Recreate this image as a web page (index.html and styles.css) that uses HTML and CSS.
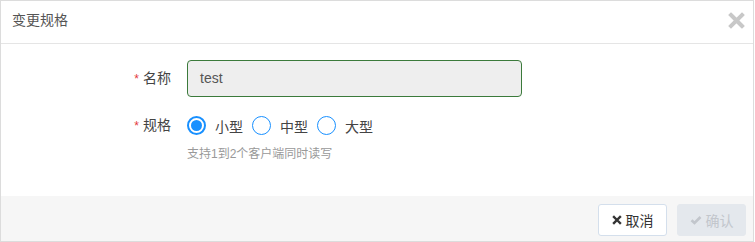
FILE: index.html
```html
<!DOCTYPE html>
<html lang="zh">
<head>
<meta charset="utf-8">
<link rel="stylesheet" href="styles.css">
</head>
<body>
<div class="modal">
  <div class="modal-header">
    <span class="modal-title">变更规格</span>
    <span class="close" aria-label="关闭">
      <svg width="17" height="17" viewBox="0 0 17 17"><path d="M3 3 L14 14 M14 3 L3 14" stroke="#c8c8c8" stroke-width="4" stroke-linecap="square"/></svg>
    </span>
  </div>
  <div class="modal-body">
    <div class="form-row">
      <label class="form-label"><span class="req">*</span>名称</label>
      <div class="form-control">
        <div class="text-input">test</div>
      </div>
    </div>
    <div class="form-row row-radio">
      <label class="form-label"><span class="req">*</span>规格</label>
      <div class="form-control">
        <div class="radio-group">
          <span class="radio checked"></span><span class="radio-text">小型</span>
          <span class="radio"></span><span class="radio-text">中型</span>
          <span class="radio"></span><span class="radio-text">大型</span>
        </div>
        <div class="hint">支持1到2个客户端同时读写</div>
      </div>
    </div>
  </div>
  <div class="modal-footer">
    <button class="btn btn-cancel"><svg width="10" height="10" viewBox="0 0 10 10"><path d="M2 2 L8 8 M8 2 L2 8" stroke="#333" stroke-width="2.4" stroke-linecap="square"/></svg>取消</button>
    <button class="btn btn-ok" disabled><svg width="12" height="10" viewBox="0 0 12 10"><path d="M1.5 5.2 L4.5 8 L10.5 2" stroke="#c2c6cc" stroke-width="2.6" fill="none"/></svg>确认</button>
  </div>
</div>
</body>
</html>
```

FILE: styles.css
```css
html, body {
  margin: 0;
  padding: 0;
  background: #fff;
}
body {
  font-family: "Liberation Sans", "Noto Sans CJK SC", sans-serif;
  font-size: 14px;
  color: #333;
}
.modal {
  width: 754px;
  height: 242px;
  box-sizing: border-box;
  border: 1px solid #dcdcdc;
  display: flex;
  flex-direction: column;
}
.modal-header {
  height: 42px;
  border-bottom: 1px solid #e5e5e5;
  display: flex;
  align-items: center;
  justify-content: space-between;
  padding: 0 8px 0 11px;
}
.modal-title {
  font-size: 14px;
  color: #555;
  margin-top: -6px;
}
.close {
  display: flex;
  margin-top: -4px;
}
.modal-body {
  flex: 1;
  padding-top: 16px;
}
.form-row {
  display: flex;
  align-items: flex-start;
}
.form-label {
  width: 170px;
  flex: none;
  text-align: right;
  line-height: 37px;
  color: #444;
}
.req {
  color: #e4393c;
  font-size: 12px;
  margin-right: 4px;
}
.form-control {
  margin-left: 16px;
}
.text-input {
  width: 335px;
  height: 37px;
  box-sizing: border-box;
  border: 1px solid #3b7a3b;
  border-radius: 4px;
  background: #eee;
  color: #555;
  padding-left: 12px;
  line-height: 35px;
}
.row-radio {
  margin-top: 9px;
}
.radio-group {
  display: flex;
  align-items: center;
  height: 37px;
}
.radio {
  width: 19px;
  height: 19px;
  box-sizing: border-box;
  border: 1px solid #1890ff;
  border-radius: 50%;
  background: #fff;
  position: relative;
}
.radio.checked {
  border-width: 2px;
}
.radio.checked::after {
  content: "";
  position: absolute;
  left: 2px;
  top: 2px;
  width: 11px;
  height: 11px;
  border-radius: 50%;
  background: #1890ff;
}
.radio-text {
  margin: 0 9px 0 9px;
  color: #444;
}
.hint {
  font-size: 12px;
  color: #999;
  margin-top: 2px;
  line-height: 16px;
}
.modal-footer {
  height: 45px;
  background: #f6f6f6;
  display: flex;
  justify-content: flex-end;
  align-items: flex-start;
  padding: 8px 7px 0 0;
  box-sizing: border-box;
  gap: 10px;
}
.btn {
  width: 69px;
  height: 32px;
  border-radius: 3px;
  font-family: inherit;
  font-size: 14px;
  display: flex;
  align-items: center;
  justify-content: center;
  gap: 4px;
  padding: 0;
}
.btn-cancel {
  background: #fff;
  border: 1px solid #d4dfec;
  color: #333;
}
.btn-ok {
  background: #e4e8ed;
  border: 1px solid #e4e8ed;
  color: #c2c6cc;
}
```
